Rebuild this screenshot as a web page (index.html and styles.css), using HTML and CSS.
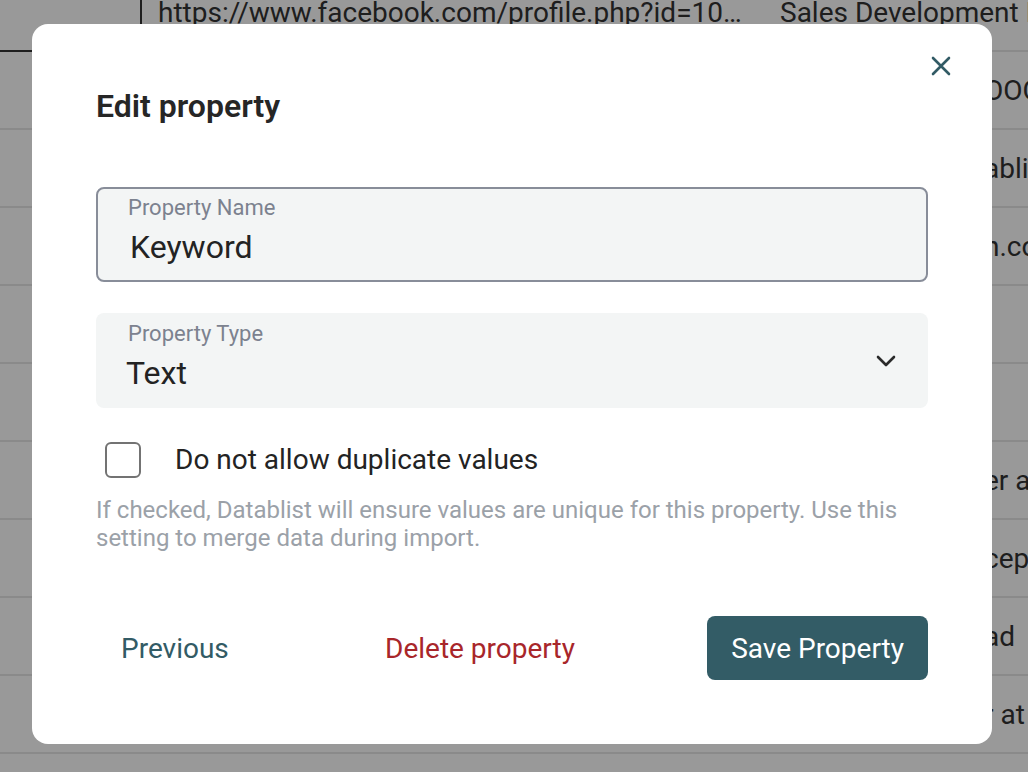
FILE: index.html
```html
<!DOCTYPE html>
<html lang="en">
<head>
<meta charset="UTF-8">
<meta name="viewport" content="width=device-width, initial-scale=1.0">
<title>Edit property</title>
<link rel="stylesheet" href="styles.css">
</head>
<body>
<div class="sheet">
    <div class="row head">
        <div class="cell first"></div>
        <div class="cell url">https://www.facebook.com/profile.php?id=10…</div>
        <div class="cell">Sales Development Rep</div>
    </div>
    <div class="row"><div class="cell first"></div><div class="cell fill"></div><div class="cell tail">OOO</div></div>
    <div class="row"><div class="cell first"></div><div class="cell fill"></div><div class="cell tail">ablis</div></div>
    <div class="row"><div class="cell first"></div><div class="cell fill"></div><div class="cell tail">n.com</div></div>
    <div class="row"><div class="cell first"></div><div class="cell fill"></div><div class="cell tail"></div></div>
    <div class="row"><div class="cell first"></div><div class="cell fill"></div><div class="cell tail"></div></div>
    <div class="row"><div class="cell first"></div><div class="cell fill"></div><div class="cell tail">er at</div></div>
    <div class="row"><div class="cell first"></div><div class="cell fill"></div><div class="cell tail">cept</div></div>
    <div class="row"><div class="cell first"></div><div class="cell fill"></div><div class="cell tail">ad</div></div>
    <div class="row"><div class="cell first"></div><div class="cell fill"></div><div class="cell tail">r at</div></div>
</div>

<div class="overlay"></div>

<div class="modal">
    <button class="close" aria-label="Close">
        <svg width="20" height="20" viewBox="0 0 20 20">
            <path d="M2 2 L18 18 M18 2 L2 18" stroke="#325b65" stroke-width="2.6" stroke-linecap="round"/>
        </svg>
    </button>
    <h2 class="title">Edit property</h2>

    <div class="field outlined">
        <label for="propName">Property Name</label>
        <input id="propName" type="text" value="Keyword">
    </div>

    <div class="field filled">
        <label>Property Type</label>
        <div class="select-value">Text</div>
        <svg class="chevron" width="22" height="14" viewBox="0 0 22 14">
            <path d="M3 3 L11 11 L19 3" fill="none" stroke="#2a2a2a" stroke-width="2.6" stroke-linecap="round" stroke-linejoin="round"/>
        </svg>
    </div>

    <label class="check">
        <span class="box"></span>
        <span>Do not allow duplicate values</span>
    </label>
    <p class="help">If checked, Datablist will ensure values are unique for this property. Use this setting to merge data during import.</p>

    <div class="actions">
        <button class="link prev">Previous</button>
        <button class="link danger">Delete property</button>
        <button class="primary">Save Property</button>
    </div>
</div>
</body>
</html>
```

FILE: styles.css
```css
html, body {
    margin: 0;
    padding: 0;
    height: 100%;
    overflow: hidden;
}
body {
    font-family: Roboto, "Liberation Sans", Arial, sans-serif;
    background-color: #fff;
}
.sheet {
    margin-top: -26px;
}
.row {
    display: flex;
    height: 78px;
    border-bottom: 2px solid #e6e6e6;
    box-sizing: border-box;
}
.cell {
    display: flex;
    align-items: center;
    font-size: 28px;
    color: #333;
    white-space: nowrap;
    overflow: hidden;
}
.cell.first {
    width: 140px;
    flex: none;
}
.head .cell.first {
    border-right: 2px solid #333;
    border-bottom: 2px solid #333;
    margin-bottom: -2px;
}
.cell.url {
    width: 622px;
    flex: none;
    padding-left: 16px;
}
.cell.fill {
    width: 836px;
    flex: none;
}
.cell.tail {
    padding-left: 8px;
}
.overlay {
    position: fixed;
    inset: 0;
    background-color: rgba(0, 0, 0, 0.4);
}
.modal {
    position: fixed;
    left: 32px;
    top: 24px;
    width: 960px;
    height: 720px;
    box-sizing: border-box;
    padding: 64px 64px 0 64px;
    background-color: #fff;
    border-radius: 16px;
    color: #232323;
}
.close {
    position: absolute;
    top: 24px;
    right: 33px;
    width: 36px;
    height: 36px;
    padding: 8px;
    border: none;
    background: none;
    cursor: pointer;
}
.title {
    margin: 0 0 63px;
    font-size: 32px;
    font-weight: 600;
    line-height: 36px;
    color: #262626;
}
.field {
    position: relative;
    height: 95px;
    box-sizing: border-box;
    border-radius: 8px;
    background-color: #f3f5f5;
    padding: 7px 32px 0 32px;
}
.field label {
    display: block;
    font-size: 22px;
    line-height: 28px;
    color: #7c828f;
}
.field.outlined {
    border: 2px solid #888d99;
    padding: 5px 30px 0 30px;
    margin-bottom: 31px;
}
.field.outlined input {
    display: block;
    width: 100%;
    border: none;
    outline: none;
    background: transparent;
    padding: 0 0 0 2px;
    margin-top: 5px;
    font-family: inherit;
    font-size: 32px;
    line-height: 40px;
    height: 40px;
    color: #232323;
}
.select-value {
    font-size: 32px;
    line-height: 40px;
    margin-top: 5px;
    margin-left: -2px;
    color: #232323;
}
.chevron {
    position: absolute;
    right: 31px;
    top: 41px;
}
.check {
    display: flex;
    align-items: center;
    gap: 34px;
    margin: 34px 0 0 9px;
    font-size: 28px;
    line-height: 36px;
    color: #232323;
}
.box {
    width: 36px;
    height: 36px;
    box-sizing: border-box;
    border: 2px solid #737373;
    border-radius: 6px;
}
.help {
    margin: 18px 0 0;
    font-size: 24px;
    line-height: 28px;
    color: #9ba1a8;
}
.actions {
    display: flex;
    justify-content: space-between;
    align-items: center;
    margin-top: 64px;
}
.actions button {
    font-family: inherit;
    font-size: 28px;
    height: 64px;
    padding: 0 24px;
    border: none;
    border-radius: 8px;
    cursor: pointer;
}
.link {
    background: none;
}
.link.prev {
    color: #325b65;
    padding-left: 25px;
}
.link.danger {
    color: #a8262a;
}
.primary {
    background-color: #335c66;
    color: #fff;
}
```
